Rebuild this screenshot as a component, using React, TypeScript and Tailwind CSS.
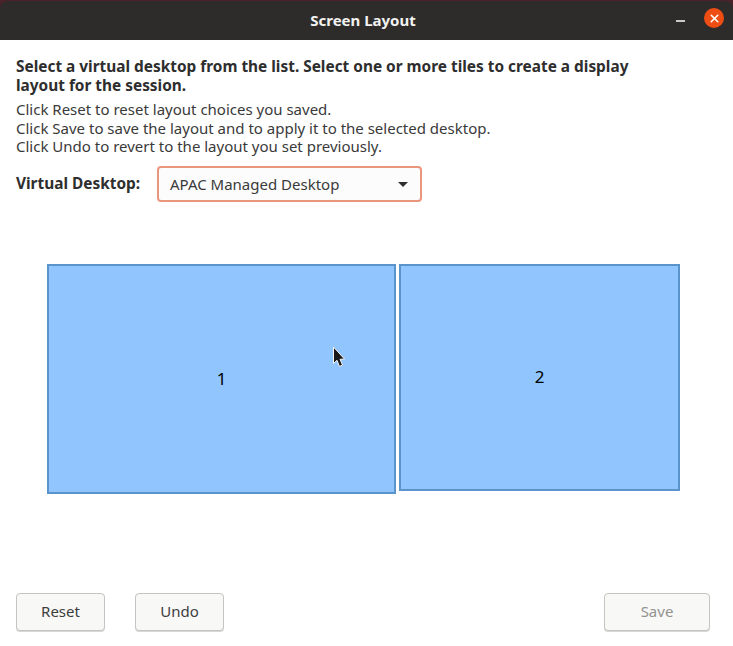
import { X } from "lucide-react";

const fontStack = { fontFamily: '"Noto Sans", "Open Sans", sans-serif' };

function Tile({ label, className }: { label: string; className: string }) {
  return (
    <div className={`flex shrink-0 items-center justify-center border-2 border-[#5b94cb] bg-[#91c5fe] pb-px text-[17px] text-black ${className}`}>
      {label}
    </div>
  );
}

function ActionButton({ label, disabled, className }: { label: string; disabled?: boolean; className: string }) {
  return (
    <button
      disabled={disabled}
      className={`h-[38px] rounded-[4px] border border-[#c4c4c1] bg-[#f8f8f7] pb-[2px] text-[15px] shadow-[0_1px_0_#d8d8d6] ${disabled ? "text-[#92928f]" : "text-[#3d3d3d]"} ${className}`}
    >
      {label}
    </button>
  );
}

export default function App() {
  return (
    <div className="flex h-[646px] w-[733px] flex-col overflow-hidden bg-white" style={fontStack}>
      <header className="h-[40px] shrink-0 bg-[#4b2229] pt-px">
        <div className="relative flex h-full items-center justify-center rounded-t-[8px] bg-[#2d2c2a] pr-[7px] text-[15px] font-bold text-[#f2f2f0]">
          Screen Layout
          <div className="absolute top-[7px] right-[9px] flex items-center gap-[19px]">
            <span className="mt-[5px] h-[2px] w-[9px] bg-[#c9c9c6]" />
            <span className="flex h-[20px] w-[20px] items-center justify-center rounded-full bg-[#ee4d14] text-white">
              <X size={13} strokeWidth={3} />
            </span>
          </div>
        </div>
      </header>

      <main className="flex flex-1 flex-col px-[16px]">
        <p className="mt-[17px] w-[640px] text-[15.4px] leading-[19px] font-bold text-[#2e2e2e]">
          Select a virtual desktop from the list. Select one or more tiles to create a display layout for the session.
        </p>
        <div className="mt-[5px] text-[15px] leading-[18.5px] text-[#3a3a3a]">
          <p>Click Reset to reset layout choices you saved.</p>
          <p>Click Save to save the layout and to apply it to the selected desktop.</p>
          <p>Click Undo to revert to the layout you set previously.</p>
        </div>

        <div className="mt-[10.5px] flex items-center">
          <span className="w-[141px] text-[15.4px] font-bold text-[#2e2e2e]">Virtual Desktop:</span>
          <div className="flex h-[36px] w-[265px] items-center justify-between rounded-[4px] border-2 border-[#e9967c] bg-[#fcfcfc] pr-[12px] pl-[11px] text-[15px] text-[#3a3a3a]">
            APAC Managed Desktop
            <span className="h-0 w-0 border-x-[5px] border-t-[5px] border-x-transparent border-t-[#2e2e2e]" />
          </div>
        </div>

        <div className="relative mt-[62px] ml-[31px] flex items-start gap-[3px]">
          <Tile label="1" className="h-[230px] w-[349px]" />
          <Tile label="2" className="h-[227px] w-[281px]" />
          <svg className="absolute top-[82px] left-[285px]" width="14" height="23" viewBox="0 0 14 23">
            <path d="M1.5 1 L1.5 17.5 L5 14.3 L7.5 20.5 L10.5 19 L8 13.3 L12.5 13 Z" fill="#1a1a1a" stroke="#f5f5f5" strokeWidth="1" />
          </svg>
        </div>

        <div className="mt-[99px] flex items-center">
          <ActionButton label="Reset" className="w-[89px]" />
          <ActionButton label="Undo" className="ml-[30px] w-[89px]" />
          <ActionButton label="Save" disabled className="ml-auto mr-[7px] w-[106px]" />
        </div>
      </main>
    </div>
  );
}
